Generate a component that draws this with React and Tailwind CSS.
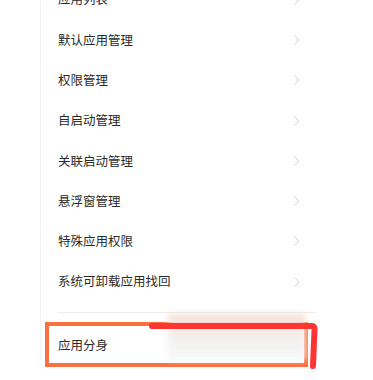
import React from "react";

const items = [
  "应用列表",
  "默认应用管理",
  "权限管理",
  "自启动管理",
  "关联启动管理",
  "悬浮窗管理",
  "特殊应用权限",
  "系统可卸载应用找回",
];

function Chevron() {
  return (
    <svg width="8" height="12" viewBox="0 0 8 12" className="shrink-0">
      <path d="M1.5 1.5 L6 6 L1.5 10.5" fill="none" stroke="#d2d2d2" strokeWidth="1" />
    </svg>
  );
}

export default function App() {
  return (
    <div
      className="relative w-[373px] h-[380px] overflow-hidden bg-white text-[#2a2a2a]"
      style={{ fontFamily: '"Noto Sans CJK SC", "Noto Sans", sans-serif' }}
    >
      <div className="ml-[40px] w-[290px] border-l border-[#f3f3f3] h-full">
        <div className="mt-[-20.5px]">
          {items.map((t) => (
            <div key={t} className="flex items-center h-[40.3px] pl-[17px] pr-[29px] justify-between">
              <span className="text-[12.5px] leading-none">{t}</span>
              <Chevron />
            </div>
          ))}
        </div>
        <div className="mt-[10.5px] ml-[17px] w-[258px] h-px bg-[#ececec]" />
        <div className="mt-[9px] ml-[4px] w-[263px] h-[45px] border-[4px] border-[#fb7040] flex items-center pl-[9px]">
          <span className="text-[12.5px] leading-none">应用分身</span>
        </div>
      </div>
      <div className="absolute left-[168px] top-[314px] w-[138px] h-[46px] blur-[3px] bg-gradient-to-b from-[#f6dbd0] via-[#f1efee] to-[#f7f7f7] opacity-90" />
      <svg className="absolute left-0 top-0" width="373" height="380">
        <path
          d="M152 326 L312 326 Q315 326 314.5 330 L313 366"
          fill="none"
          stroke="#ff3535"
          strokeWidth="6"
          strokeLinecap="round"
          strokeLinejoin="round"
        />
      </svg>
    </div>
  );
}
